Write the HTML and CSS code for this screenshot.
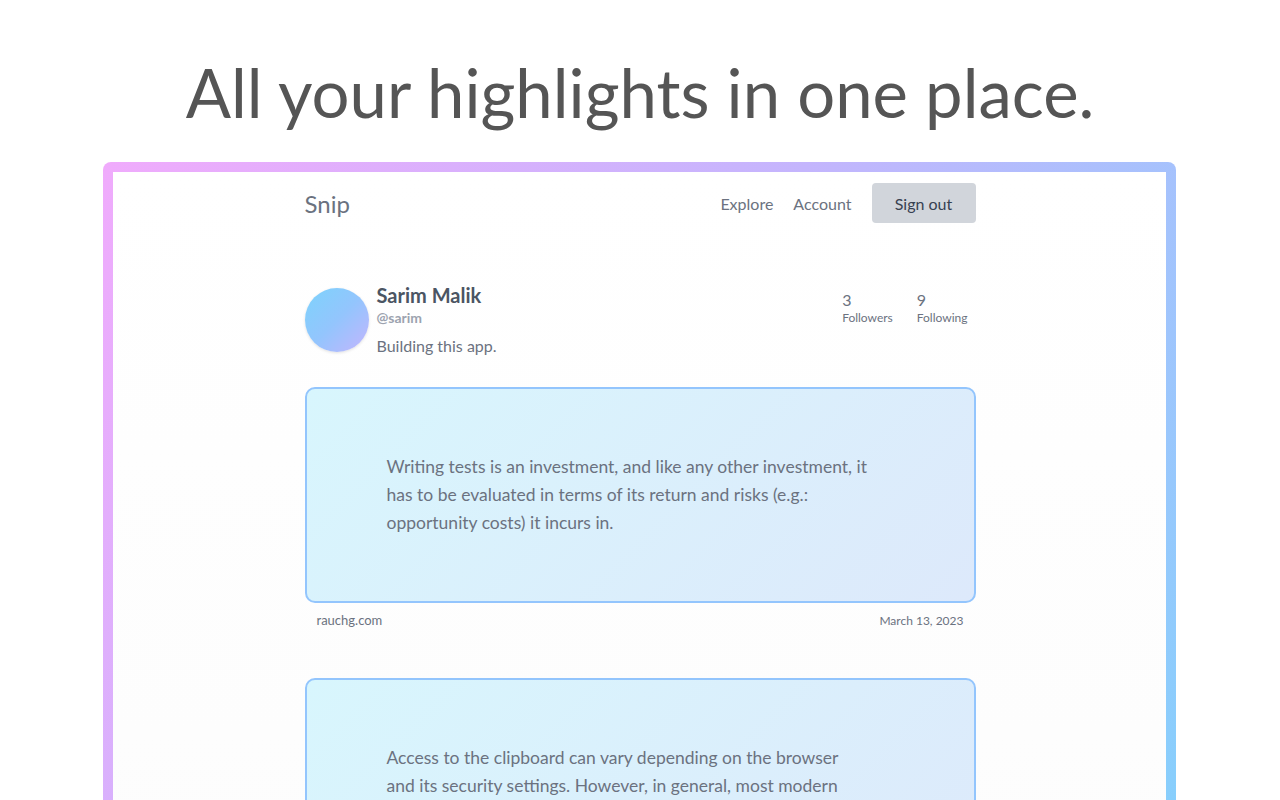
FILE: index.html
```html
<!DOCTYPE html>
<html lang="en">
<head>
    <meta charset="UTF-8">
    <meta name="viewport" content="width=device-width, initial-scale=1.0">
    <title>Snip - All your highlights in one place</title>
    <link rel="stylesheet" href="styles.css">
</head>
<body>
    <h1 class="hero-title">All your highlights in one place.</h1>

    <div class="frame">
        <div class="frame-inner">
            <div class="app">
                <nav class="nav">
                    <div class="logo">Snip</div>
                    <div class="nav-links">
                        <a class="nav-link" href="#">Explore</a>
                        <a class="nav-link" href="#">Account</a>
                        <button class="signout-button">Sign out</button>
                    </div>
                </nav>

                <div class="profile">
                    <div class="profile-main">
                        <div class="avatar"></div>
                        <div class="profile-info">
                            <div class="profile-name">Sarim Malik</div>
                            <div class="profile-handle">@sarim</div>
                            <div class="profile-bio">Building this app.</div>
                        </div>
                    </div>
                    <div class="stats">
                        <div class="stat">
                            <div class="stat-count">3</div>
                            <div class="stat-label">Followers</div>
                        </div>
                        <div class="stat">
                            <div class="stat-count">9</div>
                            <div class="stat-label">Following</div>
                        </div>
                    </div>
                </div>

                <div class="highlight">
                    <div class="highlight-card">
                        <p class="highlight-text">Writing tests is an investment, and like any other investment, it has to be evaluated in terms of its return and risks (e.g.: opportunity costs) it incurs in.</p>
                    </div>
                    <div class="highlight-meta">
                        <span class="highlight-source">rauchg.com</span>
                        <span class="highlight-date">March 13, 2023</span>
                    </div>
                </div>

                <div class="highlight">
                    <div class="highlight-card">
                        <p class="highlight-text">Access to the clipboard can vary depending on the browser and its security settings. However, in general, most modern browsers allow web pages to write to the clipboard in response to a user action, such as a click.</p>
                    </div>
                    <div class="highlight-meta">
                        <span class="highlight-source">stackoverflow.com</span>
                        <span class="highlight-date">March 12, 2023</span>
                    </div>
                </div>
            </div>
        </div>
    </div>
</body>
</html>
```

FILE: styles.css
```css
* {
    margin: 0;
    padding: 0;
    box-sizing: border-box;
}

body {
    font-family: Lato, 'Noto Sans', sans-serif;
    background: white;
    color: #6b7280;
}

.hero-title {
    font-size: 67px;
    font-weight: 400;
    line-height: 1;
    color: #555555;
    text-align: center;
    padding-top: 59px;
    margin-bottom: 36px;
}

.frame {
    margin: 0 104px 0 103px;
    padding: 10px;
    border-radius: 8px 8px 0 0;
    background: linear-gradient(120deg, #f0abfc 0%, #c4b5fd 45%, #7dd3fc 100%);
}

.frame-inner {
    background: linear-gradient(180deg, #ffffff 0%, #fcfcfc 100%);
    min-height: 840px;
}

.app {
    width: 672px;
    margin: 0 auto;
    padding-left: 1px;
}

.nav {
    display: flex;
    justify-content: space-between;
    align-items: center;
    padding-top: 11px;
}

.logo {
    font-size: 24px;
    color: #6b7280;
}

.nav-links {
    display: flex;
    align-items: center;
}

.nav-link {
    font-size: 16px;
    color: #6b7280;
    text-decoration: none;
    margin-left: 20px;
}

.signout-button {
    margin-left: 20px;
    width: 104px;
    height: 40px;
    border: none;
    border-radius: 4px;
    background: #d1d5db;
    color: #374151;
    font-family: inherit;
    font-size: 16px;
}

.profile {
    display: flex;
    justify-content: space-between;
    align-items: flex-start;
    margin-top: 59px;
}

.profile-main {
    display: flex;
    align-items: center;
    gap: 8px;
}

.avatar {
    width: 64px;
    height: 64px;
    border-radius: 50%;
    background: linear-gradient(135deg, #7dd3fc 0%, #93c5fd 50%, #c4b5fd 100%);
    box-shadow: 0 1px 3px rgba(0, 0, 0, 0.12);
}

.profile-name {
    font-size: 20px;
    font-weight: 700;
    color: #4b5563;
    line-height: 26px;
}

.profile-handle {
    font-size: 14px;
    font-weight: 700;
    color: #9ca3af;
    line-height: 20px;
}

.profile-bio {
    font-size: 16px;
    color: #6b7280;
    line-height: 24px;
    margin-top: 6px;
}

.stats {
    display: flex;
    gap: 24px;
    padding-top: 8px;
    padding-right: 8px;
}

.stat-count {
    font-size: 16px;
    line-height: 20px;
    color: #6b7280;
}

.stat-label {
    font-size: 12px;
    line-height: 16px;
    color: #6b7280;
}

.highlight {
    margin-top: 29px;
}

.highlight + .highlight {
    margin-top: 50px;
}

.highlight-card {
    border: 2px solid #93c5fd;
    border-radius: 10px;
    background: linear-gradient(135deg, #d8f6fd 0%, #dde9fb 100%);
    padding: 64px 80px;
}

.highlight-text {
    max-width: 482px;
    font-size: 17.5px;
    line-height: 28px;
    color: #6b7280;
}

.highlight-meta {
    display: flex;
    justify-content: space-between;
    align-items: baseline;
    padding: 9px 12px 0;
}

.highlight-source {
    font-size: 13px;
    color: #6b7280;
}

.highlight-date {
    font-size: 12px;
    color: #6b7280;
}
```
